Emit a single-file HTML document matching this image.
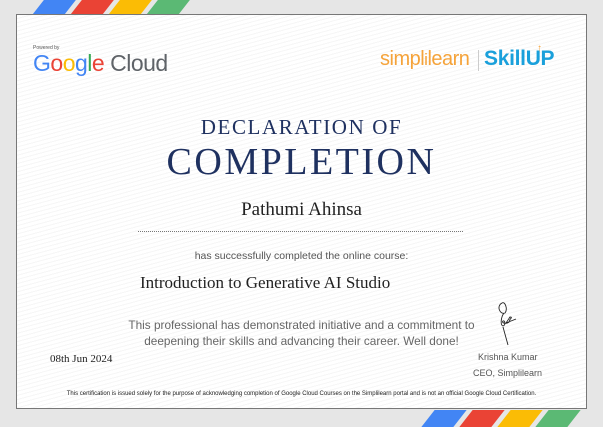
<!DOCTYPE html>
<html><head><meta charset="utf-8"><style>
body{margin:0;width:603px;height:427px;background:#e6e6e6;position:relative;overflow:hidden;font-family:"Liberation Sans",sans-serif}
.card{position:absolute;left:16px;top:14px;width:571px;height:395px;background:#fff;border:1px solid #777;box-sizing:border-box;
background-image:repeating-linear-gradient(165deg,#fff 0 3px,#f6f6f6 3px 4px)}
.s{position:absolute;height:15px;width:32px;transform:skewX(-38deg)}
.t{position:absolute;white-space:nowrap}
.serif{font-family:"Liberation Serif",serif}
.c{left:0;width:603px;text-align:center}
</style></head><body>
<div class="s" style="left:38px;top:0;background:#4285f4"></div>
<div class="s" style="left:76px;top:0;background:#ea4335"></div>
<div class="s" style="left:114px;top:0;background:#fbbc05"></div>
<div class="s" style="left:152px;top:0;background:#5bb974"></div>
<div class="card"></div>
<div class="s" style="left:428px;top:410px;height:17px;background:#4285f4"></div>
<div class="s" style="left:466px;top:410px;height:17px;background:#ea4335"></div>
<div class="s" style="left:504px;top:410px;height:17px;background:#fbbc05"></div>
<div class="s" style="left:542px;top:410px;height:17px;background:#5bb974"></div>

<div class="t" style="left:33px;top:45px;font-size:5px;color:#555">Powered by</div>
<div class="t" style="left:33px;top:50px;font-size:23px;letter-spacing:-0.5px"><span style="color:#4285f4">G</span><span style="color:#ea4335">o</span><span style="color:#fbbc05">o</span><span style="color:#4285f4">g</span><span style="color:#34a853">l</span><span style="color:#ea4335">e</span> <span style="color:#5f6368">Cloud</span></div>

<div class="t" style="left:380px;top:48px;font-size:20px;color:#f5a33a;letter-spacing:-0.5px">simpl<span style="font-size:17px">i</span>learn</div>
<div style="position:absolute;left:478px;top:50px;width:1px;height:21px;background:#ccc"></div>
<div class="t" style="left:484px;top:47px;font-size:21px;font-weight:bold;color:#1aa0db;letter-spacing:-0.3px">SkillUP</div>
<div class="t" style="left:537px;top:43px;font-size:10px;color:#f5a33a;font-weight:bold">↑</div>

<div class="t serif c" style="top:115px;font-size:21px;color:#1f3160;letter-spacing:1.6px">DECLARATION OF</div>
<div class="t serif c" style="top:140px;font-size:38px;color:#1f3160;letter-spacing:2.5px">COMPLETION</div>
<div class="t serif c" style="top:199px;font-size:19px;color:#222">Pathumi Ahinsa</div>
<div style="position:absolute;left:138px;top:231px;width:325px;border-top:1px dotted #777"></div>
<div class="t c" style="top:250px;font-size:10.5px;color:#555">has successfully completed the online course:</div>
<div class="t serif" style="left:140px;top:273px;font-size:17px;color:#222">Introduction to Generative AI Studio</div>
<div class="t c" style="top:317px;font-size:11.8px;color:#666;line-height:16px">This professional has demonstrated initiative and a commitment to<br>deepening their skills and advancing their career. Well done!</div>
<div class="t serif" style="left:50px;top:353px;font-size:11px;color:#222">08th Jun 2024</div>
<svg style="position:absolute;left:490px;top:300px" width="40" height="50" viewBox="0 0 40 50"><path d="M12 3c-6 3-2 12 3 10c3-4 0-12-3-10M14 13c-3 4-4 12-1 13c3-1 2-6 0-5c-2 2 4 4 7 0c-2-1 4-4 0-4l-4 6l10-4M13 27l5 18" fill="none" stroke="#222" stroke-width="0.9"/></svg>
<div class="t" style="left:478px;top:352px;font-size:9px;color:#555">Krishna Kumar</div>
<div class="t" style="left:473px;top:368px;font-size:9px;color:#555">CEO, Simplilearn</div>
<div class="t c" style="top:391px;font-size:6px;color:#222">This certification is issued solely for the purpose of acknowledging completion of Google Cloud Courses on the Simplilearn portal and is not an official Google Cloud Certification.</div>
</body></html>
